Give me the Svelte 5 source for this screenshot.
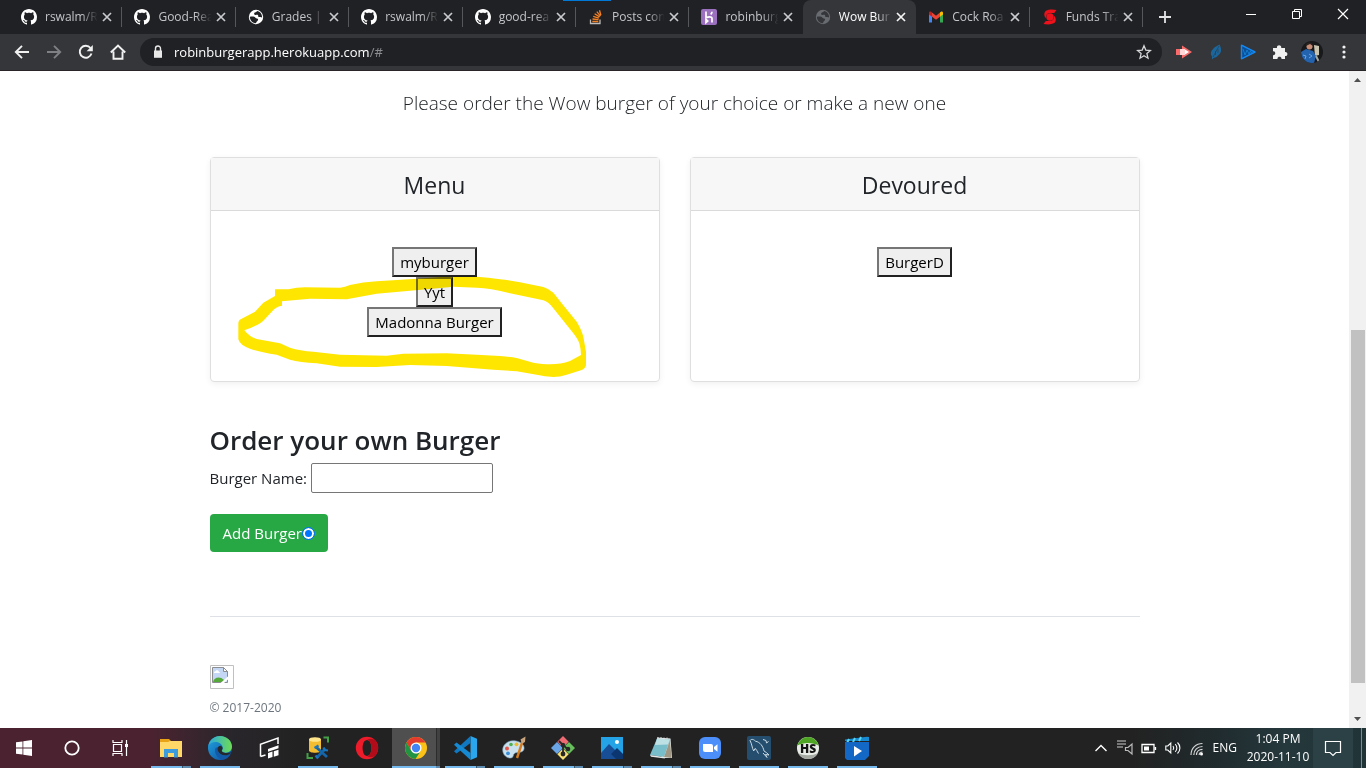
<script>
  const tabs = [
    { icon: 'github', title: 'rswalm/R' },
    { icon: 'github', title: 'Good-Rea' },
    { icon: 'globe', title: 'Grades | E' },
    { icon: 'github', title: 'rswalm/R' },
    { icon: 'github', title: 'good-rea' },
    { icon: 'stack', title: 'Posts con' },
    { icon: 'heroku', title: 'robinburg' },
    { icon: 'globe', title: 'Wow Bur', active: true },
    { icon: 'gmail', title: 'Cock Roa' },
    { icon: 'scotia', title: 'Funds Tra' }
  ];
  const apps = [
    { icon: 'explorer', run: true, stack: true },
    { icon: 'edge', run: true },
    { icon: 'flow' },
    { icon: 'ssms', run: true },
    { icon: 'opera' },
    { icon: 'chrome', run: true, stack: true, focus: true },
    { icon: 'code', run: true, stack: true },
    { icon: 'paint', run: true },
    { icon: 'git', run: true, stack: true },
    { icon: 'photos', run: true, stack: true },
    { icon: 'notepad', run: true, stack: true },
    { icon: 'zoom', run: true },
    { icon: 'mysql', run: true },
    { icon: 'hs', run: true },
    { icon: 'movies', run: true }
  ];
  const menu = ['myburger', 'Yyt', 'Madonna Burger'];
  const devoured = ['BurgerD'];
  let name = $state('');
</script>

{#snippet favicon(kind)}
  <svg class="fav" viewBox="0 0 16 16" width="16" height="16" aria-hidden="true">
    {#if kind === 'github'}
      <path fill="#fff" d="M8 0C3.58 0 0 3.58 0 8c0 3.54 2.29 6.53 5.47 7.59.4.07.55-.17.55-.38 0-.19-.01-.82-.01-1.49-2.01.37-2.53-.49-2.69-.94-.09-.23-.48-.94-.82-1.13-.28-.15-.68-.52-.01-.53.63-.01 1.08.58 1.23.82.72 1.21 1.87.87 2.33.66.07-.52.28-.87.51-1.07-1.78-.2-3.64-.89-3.64-3.95 0-.87.31-1.59.82-2.15-.08-.2-.36-1.02.08-2.12 0 0 .67-.21 2.2.82.64-.18 1.32-.27 2-.27.68 0 1.36.09 2 .27 1.53-1.04 2.2-.82 2.2-.82.44 1.1.16 1.92.08 2.12.51.56.82 1.27.82 2.15 0 3.07-1.87 3.75-3.65 3.95.29.25.54.73.54 1.48 0 1.07-.01 1.93-.01 2.2 0 .21.15.46.55.38A8.01 8.01 0 0 0 16 8c0-4.42-3.58-8-8-8z" />
    {:else if kind === 'globe'}
      <circle cx="8" cy="8" r="7.2" class="globe" />
      <path class="land" d="M1.800 7.800C3.800 7.600 6.400 7.200 7.200 8.600c.9 1.300 2.800.4 2.900 2 .1 1.400-1.800 1.300-2.100 3.600-3.200 0-6.100-2.600-6.200-6.400zM9 1.900c-.2 1.200-1.800 1.200-2.500 1.800-.8.900-.3 2.100.8 2.200 1.300.1 1.800-.6 2.600.1.700.7-.1 1.600.8 2.100.9.500 1.900.3 3.400.4.100-3.500-2-6.200-5.100-6.600z" />
    {:else if kind === 'stack'}
      <path d="M2.500 10.500v4h9.500v-4" fill="none" stroke="#bcbbbb" stroke-width="1.300" />
      <path d="M4.300 12.500h6M4.500 10l6 .7M5.200 7.400l5.700 1.700M6.600 4.800l5 3.100M8.800 2.600l3.700 4.600M11.500 1.300l1.400 5" stroke="#f48024" stroke-width="1.300" />
    {:else if kind === 'heroku'}
      <rect width="16" height="16" rx="2" fill="#9a70bf" />
      <path d="M5 2.500v6.300c2-1 6-1.800 6 .7v4M5 10.500v3l1.700-1.500zM11 2.700c0 1-.6 2-1.300 2.800" fill="none" stroke="#fff" stroke-width="1.700" />
    {:else if kind === 'gmail'}
      <path d="M1 4v9.500h3V7z" fill="#4285f4" />
      <path d="M15 4v9.500h-3V7z" fill="#34a853" />
      <path d="M12 3.500v4.200l3-2.300V4c0-1.500-1.700-2-3-.5z" fill="#fbbc04" />
      <path d="M4 3.500v4.200L1 5.400V4c0-1.500 1.700-2 3-.5z" fill="#c5221f" />
      <path d="M4 3.500l4 3.200 4-3.200v4.200l-4 3-4-3z" fill="#ea4335" />
    {:else}
      <circle cx="8" cy="8" r="3.700" fill="#ec111a" />
      <path d="M14.500 1c-3-.7-8-.8-10.500.8C1.600 3.500 1.800 7.500 4.300 9.500 3.200 6 5.500 4 8.500 4h3.800zM1.500 14.900c3 .7 8 .9 10.600-.8 2.500-1.700 2.100-5.700-.4-7.700 1.100 3.500-1.200 5.600-4.200 5.600H3.800z" fill="#ec111a" />
    {/if}
  </svg>
{/snippet}

{#snippet appIcon(kind)}
  <svg viewBox="0 0 24 24" width="24" height="24" aria-hidden="true">
    {#if kind === 'explorer'}
      <path d="M1 3h9l2 2h11v16H1z" fill="#e8a317" />
      <path d="M1 6h8l2-1h12v16H1z" fill="#ffd867" />
      <path d="M5 13h14v8.500h-4V17H9v4.500H5z" fill="#3b9bdc" />
    {:else if kind === 'edge'}
      <defs>
        <linearGradient id="eg" x1="0" x2="1"><stop offset="0" stop-color="#2ba8df" /><stop offset="1" stop-color="#6ddb55" /></linearGradient>
        <linearGradient id="eb" x1="0" x2="1" y1="0" y2="1"><stop offset="0" stop-color="#22a5e0" /><stop offset="1" stop-color="#0b4a9c" /></linearGradient>
      </defs>
      <circle cx="12" cy="12" r="12" fill="url(#eb)" />
      <path d="M.3 10C1.300 4.300 6.200 0 12 0c7 0 12 5.200 12 10.600 0 3.900-2.900 6.100-6 6.100-2.500 0-4.300-.8-4.300-1.900 0-.8 1-.9 1-2.800C14.700 8.500 11.300 6 7.700 6 4.500 6 1.700 7.500.3 10z" fill="url(#eg)" />
      <path d="M7.500 12c-1.500 5 1.500 10 6.500 11.700 3.500.2 6.600-2 8.500-5.200-3.500 2-9 1.500-11.500-1.300C9.500 15.500 9 13 10 11z" fill="#1259a8" />
      <path d="M12.500 9.700c-2.500.3-3.600 2.600-2.800 4.900 1 3 4 4.700 7.300 4.700 2.700 0 5-.8 6.300-3.300-3 1.800-7.800 1.100-9.300-.5-.9-1 .6-1.700.6-3.300 0-1-.8-2-2.100-2.500z" fill="#25282d" />
    {:else if kind === 'flow'}
      <path d="M3.500 20.500V8.300L21 2v6M3.500 20.500l5-1.500" fill="none" stroke="#fff" stroke-width="1.500" />
      <path d="M11 13l10.500-3.700v3L11 15.700zM11 17l4.500-1.400v5.400L11 22.500zM16.800 15.200l4.700-1.500v5.500l-4.700 1.500z" fill="#fff" />
    {:else if kind === 'ssms'}
      <path d="M17.500 1.500H22v5M1.500 17v5H7" fill="none" stroke="#43a047" stroke-width="2" />
      <path d="M3 3.500v11c0 3 12 3 12 0v-11z" fill="#f3bd31" />
      <ellipse cx="9" cy="3.500" rx="6" ry="2.300" fill="#ffe58a" />
      <path d="M10 11l11 10M19.500 12.500L11 21.500" stroke="#1565a8" stroke-width="2.800" />
      <path d="M8.500 12l4-2.500M17.500 11.500l1 2.500 3.500.5M9.500 19.500l2.500 3" stroke="#1976bd" stroke-width="2.200" fill="none" />
    {:else if kind === 'opera'}
      <path fill-rule="evenodd" d="M12 .8a11.200 11.200 0 1 0 0 22.400 11.200 11.200 0 0 0 0-22.400zM12 4c2.700 0 4.400 3.600 4.400 8s-1.700 8-4.400 8-4.400-3.600-4.400-8S9.300 4 12 4z" fill="#ee1c2a" />
      <path d="M12 20c3 0 4.400-4 4.400-8s-1.400-8-4.400-8c3-2.200 7.500-1.500 9.500 2 2.200 3.700 2.200 8.300 0 12-2 3.500-6.500 4.200-9.500 2z" fill="#b20c1b" />
    {:else if kind === 'chrome'}
      <circle cx="12" cy="12" r="11" fill="#fbc116" />
      <path d="M2.500 6.500a11 11 0 0 1 19 0H12L7.200 14.800z" fill="#e33b2e" />
      <path d="M2.500 6.500L7.300 14.700l4.700 2.800 3.700-1L11.500 23A11 11 0 0 1 2.500 6.500z" fill="#229342" />
      <circle cx="12" cy="12" r="5.500" fill="#fff" />
      <circle cx="12" cy="12" r="4.200" fill="#4285f4" />
    {:else if kind === 'code'}
      <path d="M17.500 0L24 2.800v18.400L17.500 24z" fill="#2aa6ef" />
      <path d="M17.500 0v7L3.500 17.500 1 15.200z" fill="#0f78c0" />
      <path d="M1 8.800l2.500-2.300L17.500 17v7z" fill="#1689d3" />
    {:else if kind === 'paint'}
      <path d="M14 5C7 3.500 1 8 .7 13.500.5 19 5 22.500 9 22c3-.4 1.500-3.500 4-5 2-1.200 8 .5 9-4C22.700 9 19 6 14 5z" fill="#c9e0ef" stroke="#7faac4" stroke-width=".6" />
      <circle cx="5" cy="12.500" r="2" fill="#e3564b" /><circle cx="9" cy="8.500" r="1.800" fill="#50b04c" /><circle cx="14.500" cy="8.300" r="1.900" fill="#efb928" /><circle cx="6" cy="17.300" r="1.900" fill="#3a8fd8" />
      <path d="M21 4L15 22" stroke="#d47b1e" stroke-width="2.400" /><path d="M23.500.5l-5 3 1.500 4 3-1.500z" fill="#c9a47d" />
    {:else if kind === 'git'}
      <path d="M12 0l5.700 5.700-5.700 5.700-5.700-5.700z" fill="#ef6b73" /><path d="M6 6l6 6-6 6-6-6z" fill="#6aa5e8" /><path d="M18 6l6 6-6 6-6-6z" fill="#67bf5b" /><path d="M12 12.600l5.700 5.700L12 24l-5.700-5.700z" fill="#f6df75" />
      <path d="M8 5l4 4v9.500M12 9l4.500 4" stroke="#272727" stroke-width="1.800" fill="none" /><circle cx="12" cy="9" r="2.200" fill="#272727" /><circle cx="12" cy="18" r="2.400" fill="#272727" /><circle cx="17" cy="13" r="2.300" fill="#272727" />
    {:else if kind === 'photos'}
      <path d="M1 1h22v22H1z" fill="#25a3e7" /><path d="M1 17L9 8l14 14v1H1z" fill="#174e96" /><path d="M11 18l6-6 6 6v5h-7z" fill="#0c3670" /><circle cx="17" cy="6" r="2" fill="#fff" />
    {:else if kind === 'notepad'}
      <path d="M8 1.500l13.500 1L23 22H13z" fill="#e4ecec" /><path d="M8 2.500l13 1L15 21 1 19z" fill="#78bdca" /><path d="M8 2.500l13 1-2 5L6 9z" fill="#bce0e4" /><path d="M1 19l14 2 1 1.500L2 20.700z" fill="#e3e9e9" /><path d="M21 4l1.500 18L15 21z" fill="#9f9784" /><path d="M9 1v2m3-2v2m3-1.500v2m3-2v2" stroke="#ddd" />
    {:else if kind === 'zoom'}
      <rect x="1" y="1" width="22" height="22" rx="6" fill="#4c8ffb" /><path d="M5 8h8a2 2 0 0 1 2 2v6H7a2 2 0 0 1-2-2zM16 11l3.500-2.700v7.400L16 13z" fill="#fff" />
    {:else if kind === 'mysql'}
      <rect width="24" height="24" rx="2" fill="#244d6e" /><path d="M3 4.500c1.500-2 4-1 5.500.7 4.500.8 7.500 5 8.500 9.800 1.500 1 3.700 2.200 5 4l-3.500-.5 1.500 3-4-4.500M3 4.500c2 3.500 2 7.500 3.700 10.500L8 12.500c1.500.5 2 3 3.500 5M16 3.500l3 1 .5 2.500 2-1.500" fill="none" stroke="#c9dbe5" />
    {:else if kind === 'hs'}
      <circle cx="12" cy="12" r="11" fill="#e9ede7" /><path d="M1.300 9.500A11 11 0 0 1 22.700 9.500C17 6 7 6 1.300 9.500z" fill="#4ea524" /><path d="M2 17c5 3 15 3 20 0-4 8-16 8-20 0z" fill="#a5aaa3" />
      <text x="12" y="16.500" text-anchor="middle" font-family="Open Sans, sans-serif" font-weight="800" font-size="12" fill="#151515">HS</text>
    {:else}
      <path d="M0 3.500L22 .8 24 1v4H0z" fill="#168bd2" /><path d="M4 3l-2 4m8-5L8 6m8-5l-2 4" stroke="#57d5f3" stroke-width="2" /><path d="M0 6h24v14L20 24H2l-2-2z" fill="#1268c4" /><path d="M9 10l8 5-8 5.500z" fill="#fff" />
    {/if}
  </svg>
{/snippet}

{#snippet cross(s)}
  <svg viewBox="0 0 16 16" width="16" height="16" aria-hidden="true"><path d="M4 4l8 8M12 4l-8 8" fill="none" stroke="currentColor" stroke-width={s} /></svg>
{/snippet}

{#snippet card(title, items, marked)}
  <section class="card">
    <h4>{title}</h4>
    <ul>
      {#each items as item}<li><button class="burger">{item}</button></li>{/each}
    </ul>
    {#if marked}
      <svg class="marker" viewBox="33 24 1350 675" width="450" height="225" aria-hidden="true">
        <path fill="#ffe600" fill-rule="evenodd" d="M225 418L265 418Q290 412 315 412L420 413Q435 411 450 405Q490 396 530 394L640 387L730 380H830Q865 382 900 388Q930 390 960 397L1030 411Q1048 417 1060 428L1085 460L1130 515Q1145 540 1150 560L1158 605V645Q1156 656 1145 660L1100 674Q1080 681 1060 681Q1035 680 1010 674L950 664L880 659L740 648L630 645L530 651L420 650L350 640Q300 637 270 629L230 614Q180 607 150 596Q120 586 115 568V520Q115 510 125 506L165 485L190 458L225 438ZM246 454V467Q230 469 220 480L190 512Q178 524 133 541Q150 562 170 567L240 580L270 593Q300 602 340 605L420 614L560 617L610 611L740 610L830 614L900 618Q930 620 950 624L1000 638Q1030 643 1050 643Q1083 643 1110 633L1143 615Q1142 594 1138 580Q1134 568 1120 550L1060 475Q1044 454 1030 451L930 430Q870 414 830 413L760 410L680 418L530 431L440 448L330 446Z" />
      </svg>
    {/if}
  </section>
{/snippet}

<div class="screen">
  <header>
    <div class="strip">
      <div class="tabs">
        {#each tabs as tab}
          <div class="tab" class:active={tab.active}>
            {@render favicon(tab.icon)}
            <span class="title">{tab.title}</span>
            <button class="icon-btn" aria-label="Close tab">{@render cross(1.7)}</button>
          </div>
        {/each}
      </div>
      <button class="icon-btn new" aria-label="New tab"><svg viewBox="0 0 16 16" width="16" height="16"><path d="M8 2v12M2 8h12" stroke="#e2e3e5" stroke-width="1.800" /></svg></button>
      <i class="loader"></i>
      <div class="window">
        <button class="icon-btn" aria-label="Minimize"><svg viewBox="0 0 16 16" width="16" height="16"><path d="M3 8.500h10" stroke="#fff" /></svg></button>
        <button class="icon-btn" aria-label="Restore"><svg viewBox="0 0 16 16" width="16" height="16"><path d="M3.500 5.500h7v7h-7zM5.500 5.500v-2h7v7h-2" fill="none" stroke="#fff" /></svg></button>
        <button class="icon-btn" aria-label="Close"><svg viewBox="0 0 16 16" width="16" height="16"><path d="M3 3l10 10M13 3L3 13" stroke="#fff" stroke-width="1.200" /></svg></button>
      </div>
    </div>
    <div class="toolbar">
      <button class="icon-btn" aria-label="Back"><svg viewBox="0 0 16 16" width="16" height="16"><path d="M15 8H2M8 1.800L1.800 8 8 14.200" fill="none" stroke="#f1f1f1" stroke-width="1.900" /></svg></button>
      <button class="icon-btn" aria-label="Forward"><svg viewBox="0 0 16 16" width="16" height="16"><path d="M1 8h13M8 1.800L14.200 8 8 14.200" fill="none" stroke="#7f8083" stroke-width="1.900" /></svg></button>
      <button class="icon-btn" aria-label="Reload"><svg viewBox="0 0 16 16" width="16" height="16"><path d="M13.500 9.500A6 6 0 1 1 12.500 4" fill="none" stroke="#f1f1f1" stroke-width="1.900" /><path d="M14.800 1v6.200H8.600z" fill="#f1f1f1" /></svg></button>
      <button class="icon-btn" aria-label="Home"><svg viewBox="0 0 16 16" width="16" height="16"><path d="M3.500 7.500v7.300h9V7.500M.8 8.500L8 1.500l7.200 7" fill="none" stroke="#f1f1f1" stroke-width="1.900" /></svg></button>
      <div class="omnibox">
        <svg viewBox="0 0 16 16" width="16" height="16" aria-hidden="true"><path d="M4 6.500h8v7.300H4z" fill="#e8e8e9" /><path d="M5.500 7V4.500a2.500 2.500 0 0 1 5 0V7" fill="none" stroke="#e8e8e9" stroke-width="1.400" /></svg>
        <p>robinburgerapp.herokuapp.com<span>/#</span></p>
        <button class="icon-btn" aria-label="Bookmark"><svg viewBox="0 0 16 16" width="16" height="16"><path d="M8 1.800l1.800 4.300 4.700.4-3.600 3.100 1.100 4.600L8 11.700l-4 2.500 1.100-4.600L1.500 6.500l4.700-.4z" fill="none" stroke="#d6d7d9" stroke-width="1.300" /></svg></button>
      </div>
      <div class="extensions">
        <button class="icon-btn" aria-label="Recorder"><svg viewBox="0 0 16 16" width="16" height="16"><path d="M0 5h6V1.500L16 8 6 14.500V11H0z" fill="#f96b6b" /><path d="M4 5h5v6H4z" fill="#ffd5d5" /><path d="M9 5.500L13 8l-4 2.500z" fill="#fff" /></svg></button>
        <button class="icon-btn" aria-label="Feather"><svg viewBox="0 0 16 16" width="16" height="16"><path d="M11.500.5c2 4 2.500 8-1 10.500l-2 2-3 1-1.500 1.500v-3C1 9 4 4 11.500.5z" fill="#1b679d" /><path d="M11 2L5 13M10 5v4M7.500 7v4" stroke="#2b3f50" stroke-width=".7" fill="none" /></svg></button>
        <button class="icon-btn" aria-label="Player"><svg viewBox="0 0 16 16" width="16" height="16"><path d="M1.500 1.200L15 8 1.500 14.800z" fill="#0b4f96" stroke="#1489f3" stroke-width="1.400" stroke-linejoin="round" /><path d="M3 5l2 6 2-5 2 4 1.500-3 1 2" stroke="#1787dd" fill="none" stroke-width=".8" /></svg></button>
        <button class="icon-btn" aria-label="Extensions"><svg viewBox="0 0 16 16" width="16" height="16"><path d="M1 4h4c-.8-3.600 5-3.600 4.200 0H13v4c3.200-.7 3.200 4.600 0 4v3H9.500c.4-3-4.400-3-4 0H1v-3.700c3 .5 3-4.400 0-3.900z" fill="#f1f1f2" /></svg></button>
        <button class="icon-btn profile" aria-label="Profile"><svg viewBox="0 0 22 22" width="22" height="22"><defs><clipPath id="av"><circle cx="11" cy="11" r="11" /></clipPath></defs><g clip-path="url(#av)"><path d="M0 0h22v22H0z" fill="#17191b" /><path d="M13 4l5 1v9l-4 1z" fill="#c9c4b0" /><path d="M0 11l5-3 7 2 3 5-2 7H1z" fill="#2463ae" /><path d="M2 14l3 1-1 3M8 13l3 2-3 2" stroke="#69a5df" fill="none" /><circle cx="8.500" cy="5.500" r="3" fill="#c98e78" /><path d="M5 5c0-5 7-4 7 0L9 3z" fill="#2d2422" /><path d="M15 15l3 6" stroke="#a4aaa5" stroke-width="2" /></g></svg></button>
        <button class="icon-btn" aria-label="Browser menu"><svg viewBox="0 0 16 16" width="16" height="16"><g fill="#f1f1f1"><circle cx="8" cy="3" r="1.600" /><circle cx="8" cy="8" r="1.600" /><circle cx="8" cy="13" r="1.600" /></g></svg></button>
      </div>
    </div>
  </header>

  <div class="viewport">
    <main>
      <div class="container">
        <p class="lead">Please order the Wow burger of your choice or make a new one</p>
        <div class="deck">
          {@render card('Menu', menu, true)}
          {@render card('Devoured', devoured, false)}
        </div>
        <form onsubmit={(e) => e.preventDefault()}>
          <h3>Order your own Burger</h3>
          <div class="field">
            <label for="burger-name">Burger Name:</label>
            <input id="burger-name" type="text" bind:value={name} />
          </div>
          <div class="submit">
            <label for="add-burger">Add Burger</label><input id="add-burger" type="radio" checked />
          </div>
        </form>
        <footer>
          <svg class="broken" viewBox="0 0 24 24" width="24" height="24" aria-hidden="true">
            <path d="M.5.500h23v23H.5z" fill="#fff" stroke="#c0c0c0" />
            <path d="M2.500 2.500h11l4 4v11h-15z" fill="#c4d8f5" stroke="#8b8d91" />
            <path d="M13.500 2.500v4h4z" fill="#fff" stroke="#8b8d91" />
            <path d="M4 8c0-2 2-1.500 2-2.500 2-1 3 .5 3 1.500 1 0 1 1 1 1z" fill="#fff" />
            <path d="M3 17c1-5 7-6 11-2l1 2z" fill="#55a83a" />
            <path d="M10 18.500l9-8v3l-5.500 5z" fill="#fff" />
          </svg>
          <small>© 2017-2020</small>
        </footer>
      </div>
    </main>
    <div class="scrollbar">
      <svg viewBox="0 0 17 17" width="17" height="17" aria-hidden="true"><path d="M8.500 7L12 11H5z" fill="#505050" /></svg>
      <div class="track"><i></i></div>
      <svg viewBox="0 0 17 17" width="17" height="17" aria-hidden="true"><path d="M5 6h7l-3.500 4z" fill="#505050" /></svg>
    </div>
  </div>

  <nav class="taskbar">
    <div class="system">
      <button aria-label="Start"><svg viewBox="0 0 16 16" width="16" height="16"><path d="M0 2.300L6.500 1.400v6.200H0zM7.300 1.300L16 0v7.600H7.300zM0 8.400h6.500v6.200L0 13.700zM7.300 8.400H16V16l-8.700-1.300z" fill="#fff" /></svg></button>
      <button aria-label="Search"><svg viewBox="0 0 16 16" width="16" height="16"><circle cx="8" cy="8" r="6.700" fill="none" stroke="#fff" stroke-width="1.800" /></svg></button>
      <button aria-label="Task view"><svg viewBox="0 0 16 16" width="16" height="16"><path d="M1 0v2.500h9V0M1.500 4.500h8v7h-8zM1 16v-2.500h9V16M14.500 0v16" fill="none" stroke="#fff" stroke-width="1.200" /><path d="M13 4h3v3h-3z" fill="#fff" /></svg></button>
    </div>
    <div class="apps">
      {#each apps as app}
        <button class:run={app.run} class:stack={app.stack} class:focus={app.focus} aria-label={app.icon}>{@render appIcon(app.icon)}</button>
      {/each}
    </div>
    <div class="tray">
      <svg viewBox="0 0 16 16" width="16" height="16"><path d="M2.500 11L8 5.500l5.500 5.500" fill="none" stroke="#fff" stroke-width="1.400" /></svg>
      <svg viewBox="0 0 16 16" width="16" height="16"><path d="M0 1h9M0 4h9M0 7h6" stroke="#ccc" stroke-width="1.200" /><path d="M8.500 7.500h2.500l4-3.500v10l-4-3.500H8.500z" fill="none" stroke="#bbb" stroke-width="1.200" /></svg>
      <svg viewBox="0 0 16 16" width="16" height="16"><path d="M1 4.500h12v8H1zM14.500 7v3" fill="none" stroke="#fff" stroke-width="1.300" /><path d="M3 6.500h5v4H3z" fill="#fff" /></svg>
      <svg viewBox="0 0 16 16" width="16" height="16"><path d="M.8 6h2l3-3v10l-3-3h-2zM8 6c1 1.300 1 2.700 0 4M10.200 4.200c2.200 2 2.200 5.600 0 7.600M12.500 2.500c3.200 3 3.200 8 0 11" fill="none" stroke="#fff" stroke-width="1.100" /></svg>
      <svg viewBox="0 0 16 16" width="16" height="16"><path d="M2 15C2 8 7 3.500 13.500 3.500M4.800 15c0-5 3.700-8.500 8.700-8.500M7.500 15c0-3.500 2.500-5.700 6-5.700M10.200 15c0-1.800 1.300-3 3.300-3" fill="none" stroke="#d4d4d4" stroke-width="1.200" /><circle cx="12.500" cy="14" r="1.500" fill="#fff" /></svg>
      <span class="lang">ENG</span>
      <time datetime="2020-11-10T13:04">1:04 PM<br />2020-11-10</time>
      <button class="notify" aria-label="Notifications"><svg viewBox="0 0 18 18" width="18" height="18"><path d="M1.500 2.500h15v11h-4.500L9 16.500l-3-3H1.500z" fill="none" stroke="#fff" stroke-width="1.200" /></svg></button>
    </div>
  </nav>
</div>

<style>
  :global(body) { margin: 0; }
  .screen { display: flex; flex-direction: column; height: 100vh; overflow: hidden; font-family: "Open Sans", "Noto Sans", sans-serif; color: #212529; background: #fff; }
  .screen :global(*) { box-sizing: border-box; }
  svg { display: block; flex: none; }
  p, h3, h4, ul { margin: 0; padding: 0; }
  ul { list-style: none; }
  button { font-family: inherit; }
  .icon-btn { display: grid; place-items: center; flex: none; width: 16px; height: 16px; padding: 0; border: 0; background: none; color: #c8cacd; }

  header { flex: none; background: #35363a; border-bottom: 1px solid #292426; }
  .strip { position: relative; display: flex; height: 34px; padding-left: 9px; background: #202124; }
  .tabs { display: flex; flex: 0 1 1134px; min-width: 0; }
  .tab { position: relative; display: flex; align-items: center; flex: 1 1 0; min-width: 0; padding: 0 7px 0 12px; color: #c3c5c8; }
  .tab::after { content: ""; position: absolute; right: 0; top: 7px; width: 1px; height: 20px; background: #55575b; }
  .tab.active { border-radius: 8px 8px 0 0; background: #35363a; color: #fff; }
  .tab.active .icon-btn { color: #f5f5f5; }
  .tab.active::after, .tab:has(+ .active)::after { display: none; }
  .title { flex: 1; min-width: 0; margin: 0 -2px 0 8px; white-space: nowrap; font-size: 12px; line-height: 18px; mask-image: linear-gradient(90deg, #000 65%, transparent 94%); }
  .globe { fill: #fff; }
  .land { fill: #202124; }
  .active .globe { fill: #686b70; }
  .active .land { fill: #35363a; }
  .new { margin: 9px 0 0 14px; }
  .loader { position: absolute; left: 563px; top: 0; width: 48px; height: 1px; background: #0078d7; }
  .window { display: flex; gap: 30px; margin-left: auto; padding: 6px 15px 0 0; }
  .toolbar { display: flex; align-items: center; gap: 16px; height: 36px; padding: 0 14px; }
  .omnibox { display: flex; align-items: center; flex: 1; gap: 8px; height: 28px; margin-left: -2px; padding: 0 10px; border-radius: 14px; background: #202124; }
  .omnibox p { flex: 1; font-size: 13px; line-height: 20px; color: #fff; }
  .omnibox span { color: #8b8d91; }
  .extensions { display: flex; align-items: center; gap: 16px; margin-left: -2px; }
  .extensions .profile { width: 22px; height: 22px; margin: 0 -3px; }

  .viewport { display: flex; flex: 1; min-height: 0; }
  main { flex: 1; min-width: 0; overflow: hidden; }
  .container { max-width: 960px; margin: 0 auto; padding: 17px 15px 0; }
  .lead { font-size: 19px; font-weight: 300; line-height: 30px; text-align: center; }
  .deck { display: grid; grid-template-columns: 1fr 1fr; gap: 30px; margin-top: 39px; }
  .card { position: relative; min-height: 225px; border: 1px solid #dfdfdf; border-radius: 4px; box-shadow: 0 2px 6px rgba(0, 0, 0, .06); text-align: center; }
  .card h4 { padding: 13px 20px 10px; border-bottom: 1px solid #dadada; background: #f7f7f7; font-size: 23px; font-weight: 400; line-height: 29px; }
  .card ul { padding: 36px 20px 44px; }
  .card li { display: flex; justify-content: center; }
  .burger { height: 30px; padding: 0 6px; border: 2px solid; border-color: #767676 #212121 #212121 #767676; border-radius: 0; background: #efefef; color: #000; font-size: 15px; line-height: 24px; }
  .marker { position: absolute; left: 0; top: 0; mix-blend-mode: multiply; pointer-events: none; }
  form { display: flex; flex-direction: column; align-items: flex-start; margin-top: 41px; }
  h3 { font-size: 26px; font-weight: 600; line-height: 34px; }
  .field { display: flex; align-items: center; gap: 4px; margin-top: 6px; font-size: 15px; }
  .field input { width: 182px; height: 30px; padding: 1px 2px; border: 1px solid #767676; border-radius: 2px; background: #fff; font: inherit; }
  .submit { display: inline-flex; align-items: center; height: 38px; margin-top: 21px; padding: 0 13px; border-radius: 4px; background: #28a745; color: #fff; font-size: 15px; line-height: 24px; }
  .submit input { appearance: none; width: 13px; height: 13px; margin: 0; border: 1px solid #0075ff; border-radius: 50%; background: #0075ff; box-shadow: inset 0 0 0 2px #fff; }
  footer { margin-top: 64px; padding-top: 48px; border-top: 1px solid #dee2e6; }
  footer small { display: block; margin-top: 9px; font-size: 12px; line-height: 19px; color: #6c757d; }

  .scrollbar { display: flex; flex-direction: column; flex: none; width: 17px; background: #f1f1f1; }
  .track { display: flex; flex: 1; flex-direction: column; padding: 0 1px 0 2px; }
  .track::before { content: ""; flex: 242; }
  .track i { flex: 353; background: #c1c1c1; }
  .track::after { content: ""; flex: 28; }

  .taskbar { display: flex; flex: none; height: 40px; background: linear-gradient(90deg, #4b2330 0, #4b2330 11%, #29262b 17%, #222 22%, #222 83%, #202b2e 89%, #25383c 94%, #203438 100%); color: #fff; }
  .taskbar button { display: grid; place-items: center; width: 48px; height: 40px; padding: 0; border: 0; background: none; }
  .system, .apps { display: flex; }
  .apps { gap: 1px; margin-left: 3px; }
  .apps button { position: relative; }
  .apps .run::after { content: ""; position: absolute; left: 4px; right: 4px; bottom: 0; height: 2px; background: #76b9ed; }
  .apps .stack::after { background: linear-gradient(90deg, #76b9ed 31px, #35566f 31px, #35566f 32px, #5d8cb0 32px); }
  .apps .focus { background: linear-gradient(90deg, #4f4f4f 44px, #2c2c2c 44px, #2c2c2c 45px, #414141 45px); }
  .apps .focus::after { left: 0; right: 0; background: linear-gradient(90deg, #76b9ed 44px, #5d8cb0 44px); }
  .tray { display: flex; align-items: center; gap: 8px; margin-left: auto; padding-right: 4px; border-right: 1px solid #7d898b; margin-right: 4px; }
  .tray .lang { font-size: 12px; line-height: 18px; }
  time { width: 66px; font-size: 12px; line-height: 18px; text-align: center; white-space: nowrap; }
  .tray .notify { width: 40px; margin: 0 4px 0 -6px; background: #2b4146; }
</style>
